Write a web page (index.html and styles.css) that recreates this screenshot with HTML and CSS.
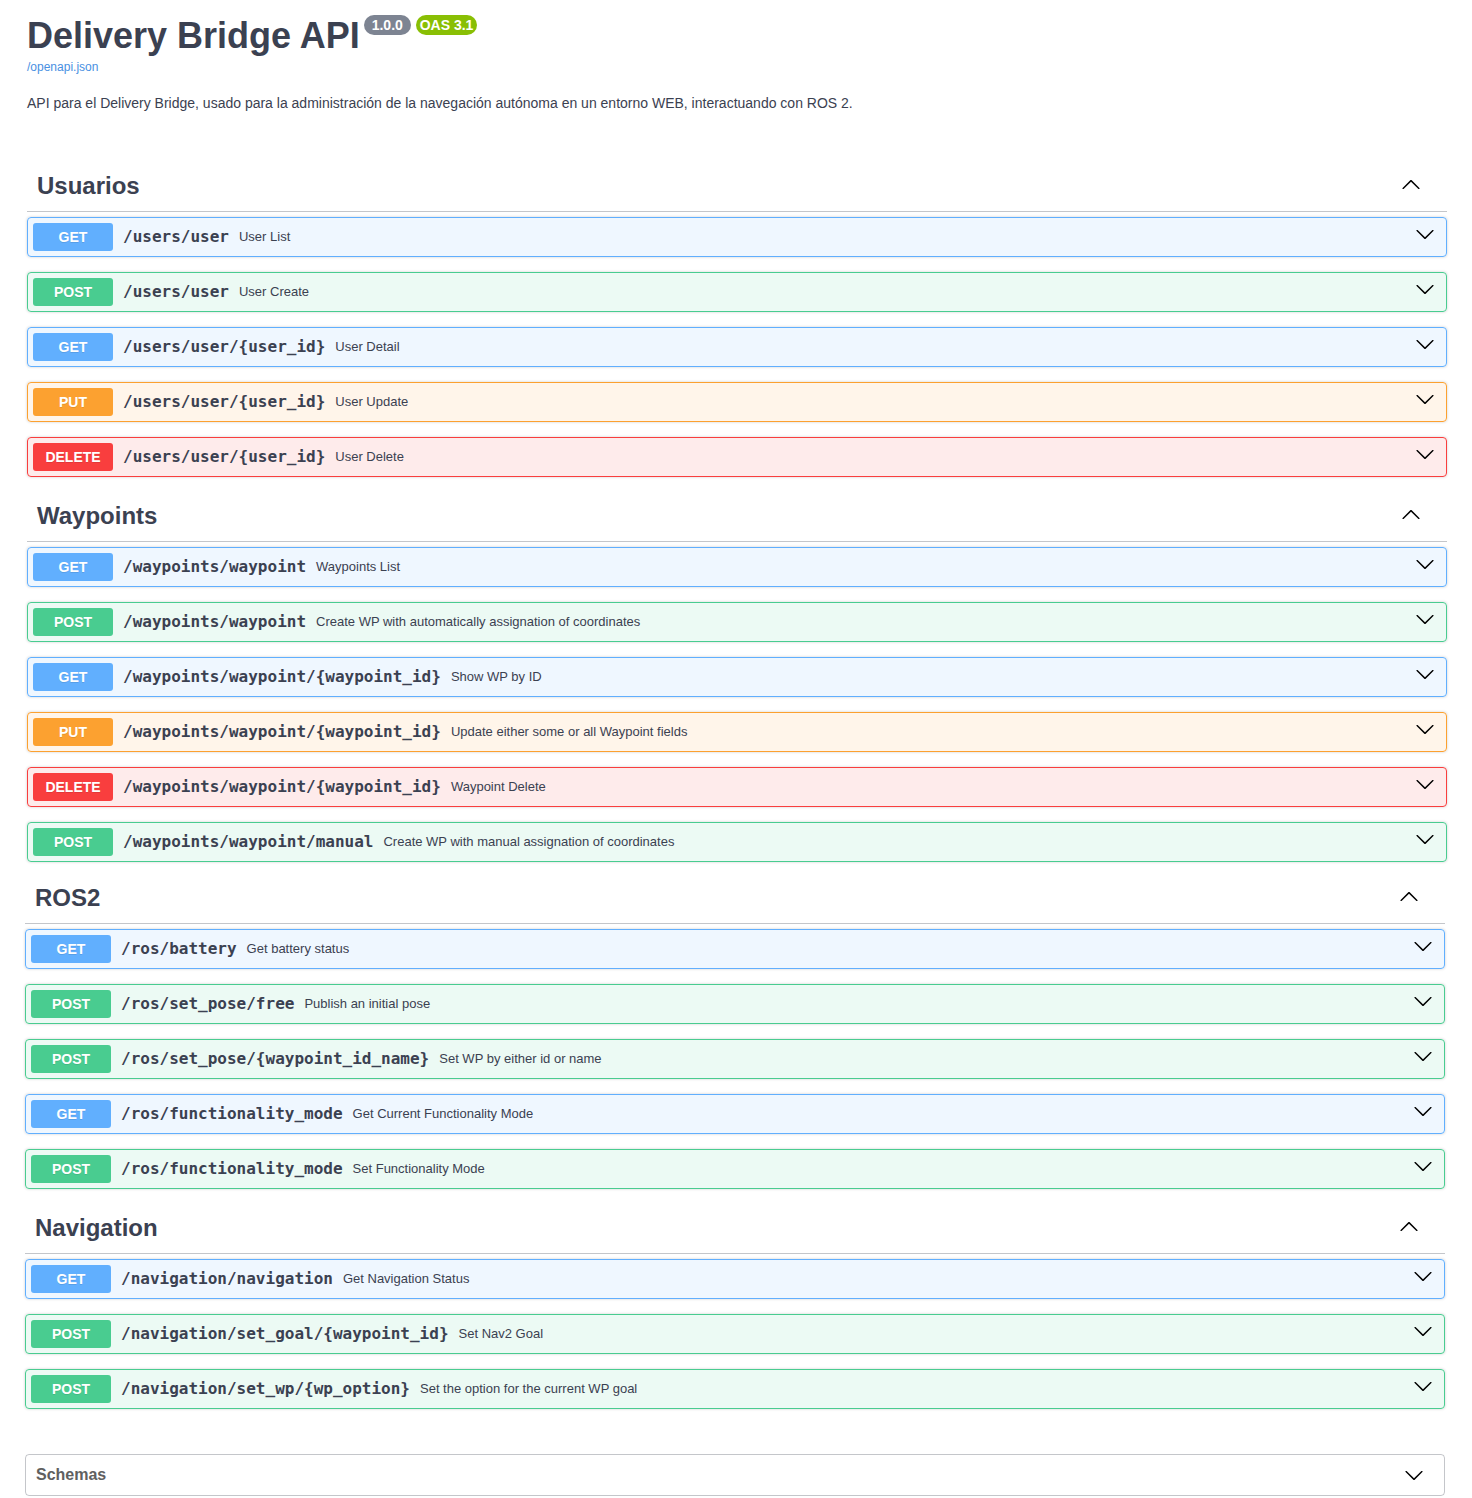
FILE: index.html
```html
<!DOCTYPE html>
<html lang="es">
<head>
<meta charset="utf-8">
<title>Delivery Bridge API</title>
<link rel="stylesheet" href="styles.css">
</head>
<body>
<svg class="svg-defs" width="0" height="0" aria-hidden="true">
  <defs>
    <symbol id="large-arrow-down" viewBox="0 0 20 20">
      <path d="M17.418 6.109c.272-.268.709-.268.979 0s.271.701 0 .969l-7.908 7.83c-.27.268-.707.268-.979 0l-7.908-7.830c-.27-.268-.27-.701 0-.969.271-.268.709-.268.979 0L10 13.25l7.418-7.141z"/>
    </symbol>
    <symbol id="large-arrow-up" viewBox="0 0 20 20">
      <path transform="rotate(180 10 10.5)" d="M17.418 6.109c.272-.268.709-.268.979 0s.271.701 0 .969l-7.908 7.83c-.27.268-.707.268-.979 0l-7.908-7.83c-.27-.268-.27-.701 0-.969.271-.268.709-.268.979 0L10 13.25l7.418-7.141z"/>
    </symbol>
  </defs>
</svg>
<div class="wrapper">
  <div class="info">
    <div class="title-row">
      <h2 class="title">Delivery Bridge API</h2>
      <span class="badge badge-version"> 1.0.0 </span>
      <span class="badge badge-oas">OAS 3.1</span>
    </div>
    <p class="base-url"><a href="#">/openapi.json</a></p>
    <p class="description">API para el Delivery Bridge, usado para la administración de la navegación autónoma en un entorno WEB, interactuando con ROS 2.</p>
  </div>

  <div class="tag-section shifted">
    <h3 class="opblock-tag"><span class="tag-name">Usuarios</span><svg class="tag-arrow"><use href="#large-arrow-up"/></svg></h3>
    <div class="opblock op-get"><div class="opblock-summary"><span class="method">GET</span><span class="path">/users/user</span><span class="summary-desc">User List</span><svg class="op-arrow"><use href="#large-arrow-down"/></svg></div></div>
    <div class="opblock op-post"><div class="opblock-summary"><span class="method">POST</span><span class="path">/users/user</span><span class="summary-desc">User Create</span><svg class="op-arrow"><use href="#large-arrow-down"/></svg></div></div>
    <div class="opblock op-get"><div class="opblock-summary"><span class="method">GET</span><span class="path">/users/user/{user_id}</span><span class="summary-desc">User Detail</span><svg class="op-arrow"><use href="#large-arrow-down"/></svg></div></div>
    <div class="opblock op-put"><div class="opblock-summary"><span class="method">PUT</span><span class="path">/users/user/{user_id}</span><span class="summary-desc">User Update</span><svg class="op-arrow"><use href="#large-arrow-down"/></svg></div></div>
    <div class="opblock op-delete"><div class="opblock-summary"><span class="method">DELETE</span><span class="path">/users/user/{user_id}</span><span class="summary-desc">User Delete</span><svg class="op-arrow"><use href="#large-arrow-down"/></svg></div></div>
  </div>

  <div class="tag-section shifted">
    <h3 class="opblock-tag"><span class="tag-name">Waypoints</span><svg class="tag-arrow"><use href="#large-arrow-up"/></svg></h3>
    <div class="opblock op-get"><div class="opblock-summary"><span class="method">GET</span><span class="path">/waypoints/waypoint</span><span class="summary-desc">Waypoints List</span><svg class="op-arrow"><use href="#large-arrow-down"/></svg></div></div>
    <div class="opblock op-post"><div class="opblock-summary"><span class="method">POST</span><span class="path">/waypoints/waypoint</span><span class="summary-desc">Create WP with automatically assignation of coordinates</span><svg class="op-arrow"><use href="#large-arrow-down"/></svg></div></div>
    <div class="opblock op-get"><div class="opblock-summary"><span class="method">GET</span><span class="path">/waypoints/waypoint/{waypoint_id}</span><span class="summary-desc">Show WP by ID</span><svg class="op-arrow"><use href="#large-arrow-down"/></svg></div></div>
    <div class="opblock op-put"><div class="opblock-summary"><span class="method">PUT</span><span class="path">/waypoints/waypoint/{waypoint_id}</span><span class="summary-desc">Update either some or all Waypoint fields</span><svg class="op-arrow"><use href="#large-arrow-down"/></svg></div></div>
    <div class="opblock op-delete"><div class="opblock-summary"><span class="method">DELETE</span><span class="path">/waypoints/waypoint/{waypoint_id}</span><span class="summary-desc">Waypoint Delete</span><svg class="op-arrow"><use href="#large-arrow-down"/></svg></div></div>
    <div class="opblock op-post"><div class="opblock-summary"><span class="method">POST</span><span class="path">/waypoints/waypoint/manual</span><span class="summary-desc">Create WP with manual assignation of coordinates</span><svg class="op-arrow"><use href="#large-arrow-down"/></svg></div></div>
  </div>

  <div class="tag-section tight">
    <h3 class="opblock-tag"><span class="tag-name">ROS2</span><svg class="tag-arrow"><use href="#large-arrow-up"/></svg></h3>
    <div class="opblock op-get"><div class="opblock-summary"><span class="method">GET</span><span class="path">/ros/battery</span><span class="summary-desc">Get battery status</span><svg class="op-arrow"><use href="#large-arrow-down"/></svg></div></div>
    <div class="opblock op-post"><div class="opblock-summary"><span class="method">POST</span><span class="path">/ros/set_pose/free</span><span class="summary-desc">Publish an initial pose</span><svg class="op-arrow"><use href="#large-arrow-down"/></svg></div></div>
    <div class="opblock op-post"><div class="opblock-summary"><span class="method">POST</span><span class="path">/ros/set_pose/{waypoint_id_name}</span><span class="summary-desc">Set WP by either id or name</span><svg class="op-arrow"><use href="#large-arrow-down"/></svg></div></div>
    <div class="opblock op-get"><div class="opblock-summary"><span class="method">GET</span><span class="path">/ros/functionality_mode</span><span class="summary-desc">Get Current Functionality Mode</span><svg class="op-arrow"><use href="#large-arrow-down"/></svg></div></div>
    <div class="opblock op-post"><div class="opblock-summary"><span class="method">POST</span><span class="path">/ros/functionality_mode</span><span class="summary-desc">Set Functionality Mode</span><svg class="op-arrow"><use href="#large-arrow-down"/></svg></div></div>
  </div>

  <div class="tag-section">
    <h3 class="opblock-tag"><span class="tag-name">Navigation</span><svg class="tag-arrow"><use href="#large-arrow-up"/></svg></h3>
    <div class="opblock op-get"><div class="opblock-summary"><span class="method">GET</span><span class="path">/navigation/navigation</span><span class="summary-desc">Get Navigation Status</span><svg class="op-arrow"><use href="#large-arrow-down"/></svg></div></div>
    <div class="opblock op-post"><div class="opblock-summary"><span class="method">POST</span><span class="path">/navigation/set_goal/{waypoint_id}</span><span class="summary-desc">Set Nav2 Goal</span><svg class="op-arrow"><use href="#large-arrow-down"/></svg></div></div>
    <div class="opblock op-post"><div class="opblock-summary"><span class="method">POST</span><span class="path">/navigation/set_wp/{wp_option}</span><span class="summary-desc">Set the option for the current WP goal</span><svg class="op-arrow"><use href="#large-arrow-down"/></svg></div></div>
  </div>

  <section class="models">
    <h4 class="models-title"><span class="models-name">Schemas</span><svg class="models-arrow"><use href="#large-arrow-down"/></svg></h4>
  </section>
</div>
</body>
</html>
```

FILE: styles.css
```css
* { box-sizing: border-box; }

body {
  margin: 0;
  background: #fff;
  color: #3b4151;
  font-family: "Liberation Sans", Arial, sans-serif;
}

.svg-defs {
  display: block;
  width: 0;
  height: 0;
  overflow: hidden;
}

.wrapper {
  padding: 0 27px 0 25px;
}

/* ---------- info ---------- */
.info {
  margin-left: 2px;
  padding: 15px 0 51px;
}

.title-row {
  display: flex;
  align-items: flex-start;
}

.title {
  margin: 0;
  font-size: 36px;
  line-height: 42px;
  font-weight: 700;
  color: #3b4151;
}

.badge {
  margin: 0 0 0 5px;
  padding: 2px 4px;
  border-radius: 57px;
  font-size: 14px;
  line-height: 16px;
  font-weight: 700;
  color: #fff;
  white-space: pre;
}

.badge-version {
  margin-left: 4px;
  background: #7d8492;
}

.badge-oas {
  background: #89bf04;
}

.base-url {
  margin: 3px 0 0;
  font-size: 12px;
  line-height: 14px;
}

.base-url a {
  color: #4990e2;
  text-decoration: none;
}

.description {
  margin: 21px 0 0;
  font-size: 14px;
  line-height: 16px;
  color: #3b4151;
}

/* ---------- tag sections ---------- */
.tag-section {
  display: flex;
  flex-direction: column;
}

.tag-section.shifted {
  margin-left: 2px;
  margin-right: -2px;
}

.tag-section.tight {
  margin-top: -3px;
}

.opblock-tag {
  display: flex;
  align-items: flex-start;
  margin: 0 0 5px;
  padding: 9px 20px 11px 10px;
  border-bottom: 1px solid rgba(59, 65, 81, 0.3);
  font-size: 24px;
  line-height: 29px;
  font-weight: 700;
  color: #3b4151;
}

.tag-name {
  flex: 1;
}

.tag-arrow {
  width: 20px;
  height: 20px;
  margin: 3px 6px 0 0;
  fill: #000;
}

/* ---------- operations ---------- */
.opblock {
  margin: 0 0 15px;
  border: 1px solid #000;
  border-radius: 4px;
  box-shadow: 0 0 3px rgba(0, 0, 0, 0.19);
}

.opblock-summary {
  display: flex;
  align-items: center;
  padding: 5px;
}

.method {
  min-width: 80px;
  padding: 6px 0;
  border-radius: 3px;
  font-size: 14px;
  line-height: 16px;
  font-weight: 700;
  color: #fff;
  text-align: center;
  text-shadow: 0 1px 0 rgba(0, 0, 0, 0.1);
}

.path {
  padding: 0 10px 2px;
  font-family: "DejaVu Sans Mono", monospace;
  font-size: 16px;
  font-weight: 600;
  color: #3b4151;
}

.summary-desc {
  flex: 1;
  padding-bottom: 2px;
  font-size: 13px;
  color: #3b4151;
}

.op-arrow {
  width: 20px;
  height: 20px;
  align-self: flex-start;
  margin: 1px 6px 0 0;
  fill: #000;
}

.op-get { background: rgba(97, 175, 254, 0.1); border-color: #61affe; }
.op-get .method { background: #61affe; }

.op-post { background: rgba(73, 204, 144, 0.1); border-color: #49cc90; }
.op-post .method { background: #49cc90; }

.op-put { background: rgba(252, 161, 48, 0.1); border-color: #fca130; }
.op-put .method { background: #fca130; }

.op-delete { background: rgba(249, 62, 62, 0.1); border-color: #f93e3e; }
.op-delete .method { background: #f93e3e; }

/* ---------- schemas ---------- */
.models {
  margin: 30px 0;
  border: 1px solid rgba(59, 65, 81, 0.3);
  border-radius: 4px;
}

.models-title {
  display: flex;
  align-items: center;
  margin: 0;
  padding: 10px 20px 10px 10px;
  font-size: 16px;
  line-height: 20px;
  font-weight: 700;
  color: #606060;
}

.models-name {
  flex: 1;
}

.models-arrow {
  width: 20px;
  height: 20px;
  fill: #000;
}
```
